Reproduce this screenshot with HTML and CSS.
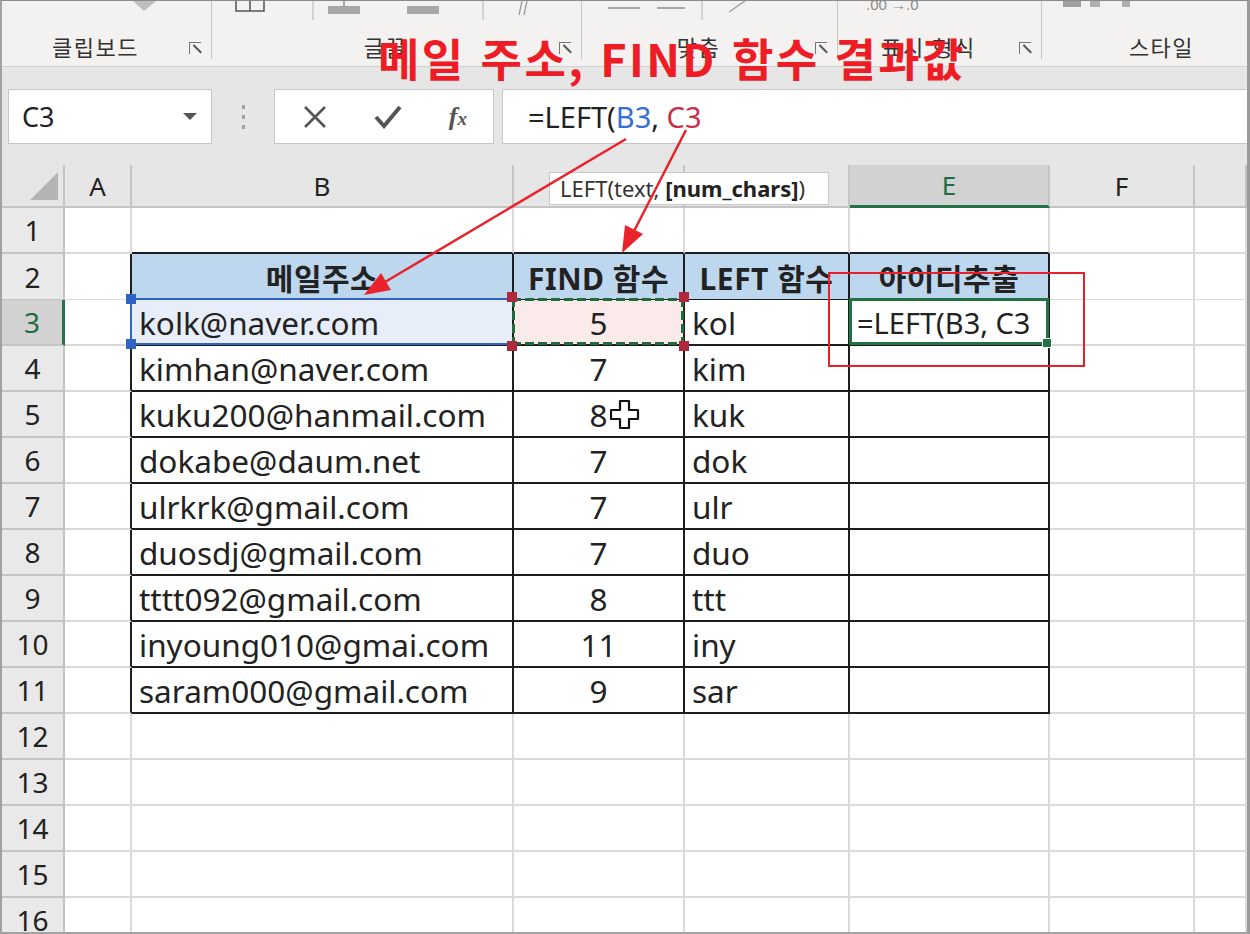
FILE: index.html
```html
<!DOCTYPE html>
<html lang="ko">
<head>
    <meta charset="UTF-8">
    <meta name="viewport" content="width=device-width, initial-scale=1.0">
    <title>LEFT 함수 - 아이디 추출</title>
    <link rel="stylesheet" href="styles.css">
</head>
<body>
    <div class="window">

        <!-- 리본 (잘린 아래쪽) -->
        <div class="ribbon">
            <div class="group g1">
                <svg class="g-top" width="212" height="22">
                    <polygon points="131,0 154,0 142,10" fill="#bdbdbd"/>
                </svg>
                <div class="g-label"><span>클립보드</span><i class="launcher"></i></div>
            </div>
            <div class="group g2">
                <svg class="g-top" width="370" height="22">
                    <rect x="24" y="-4" width="28" height="14" fill="none" stroke="#555" stroke-width="1.5"/>
                    <line x1="38" y1="-4" x2="38" y2="10" stroke="#555" stroke-width="1.5"/>
                    <line x1="101" y1="0" x2="101" y2="19" stroke="#c8c8c8" stroke-width="1.5"/>
                    <rect x="116" y="5" width="32" height="8" fill="#a8a8a8"/>
                    <rect x="131" y="0" width="2" height="5" fill="#a8a8a8"/>
                    <rect x="195" y="5" width="32" height="8" fill="#a8a8a8"/>
                    <line x1="271" y1="0" x2="271" y2="19" stroke="#c8c8c8" stroke-width="1.5"/>
                    <line x1="310" y1="0" x2="307" y2="14" stroke="#999" stroke-width="1.2"/>
                    <line x1="315" y1="0" x2="312" y2="14" stroke="#999" stroke-width="1.2"/>
                </svg>
                <div class="g-label"><span>글꼴</span><i class="launcher"></i></div>
            </div>
            <div class="group g3">
                <svg class="g-top" width="256" height="22">
                    <line x1="26" y1="7" x2="58" y2="7" stroke="#8c8c8c" stroke-width="1.5"/>
                    <line x1="75" y1="7" x2="103" y2="7" stroke="#8c8c8c" stroke-width="1.5"/>
                    <line x1="120" y1="0" x2="120" y2="19" stroke="#c8c8c8" stroke-width="1.5"/>
                    <line x1="163" y1="0" x2="147" y2="11" stroke="#a0a0a0" stroke-width="1.5"/>
                </svg>
                <div class="g-label"><span>맞춤</span><i class="launcher"></i></div>
            </div>
            <div class="group g4">
                <svg class="g-top" width="204" height="22">
                    <text x="28" y="9" font-size="15" fill="#8a8a8a" font-family="Liberation Sans, sans-serif">.00 &#8594;.0</text>
                </svg>
                <div class="g-label"><span>표시 형식</span><i class="launcher"></i></div>
            </div>
            <div class="group g5">
                <svg class="g-top" width="200" height="22">
                    <rect x="21" y="0" width="18" height="6" fill="#a0a0a0"/>
                    <rect x="48" y="0" width="10" height="6" fill="#b0b0b0"/>
                    <rect x="80" y="0" width="8" height="6" fill="#b0b0b0"/>
                </svg>
                <div class="g-label"><span>스타일</span></div>
            </div>
        </div>

        <!-- 이름 상자 / 수식 입력줄 -->
        <div class="formula-area">
            <div class="name-box">
                <span>C3</span>
                <svg width="14" height="8"><polygon points="0,0 14,0 7,7" fill="#555"/></svg>
            </div>
            <div class="dots"><b></b><b></b><b></b></div>
            <div class="fbuttons">
                <svg width="24" height="24"><path d="M2 2 L22 22 M22 2 L2 22" stroke="#555" stroke-width="2.6"/></svg>
                <svg width="28" height="24"><path d="M2 12 L10 21 L26 2" stroke="#555" stroke-width="4" fill="none"/></svg>
                <span class="fx">f<small>x</small></span>
            </div>
            <div class="finput"><span>=LEFT(<span class="ref-b">B3</span>, <span class="ref-c">C3</span></span></div>
        </div>

        <!-- 시트 -->
        <div class="sheet">
            <div class="row colhead">
                <div class="corner"><svg width="28" height="28"><polygon points="28,0 28,28 0,28" fill="#b4b4b4"/></svg></div>
                <div>A</div><div>B</div><div>C</div><div>D</div><div class="sel">E</div><div>F</div><div></div>
            </div>
            <div class="row">
                <div class="rh">1</div><div></div><div class="tt"></div><div class="tt"></div><div class="tt"></div><div class="tt"></div><div></div><div></div>
            </div>
            <div class="row">
                <div class="rh">2</div><div class="tl"></div>
                <div class="t th">메일주소</div><div class="t th">FIND 함수</div><div class="t th">LEFT 함수</div><div class="t th">아이디추출</div>
                <div></div><div></div>
            </div>
            <div class="row">
                <div class="rh sel">3</div><div class="tl"></div>
                <div class="t b3">kolk@naver.com
                    <span class="sel-blue"><i class="k k1"></i><i class="k k2"></i></span>
                </div>
                <div class="t num c3">5
                    <span class="sel-dash"><i class="k k1"></i><i class="k k2"></i><i class="k k3"></i><i class="k k4"></i></span>
                </div>
                <div class="t">kol</div>
                <div class="t e3">=LEFT(B3, C3<span class="sel-green"><i class="handle"></i></span></div>
                <div></div><div></div>
            </div>
            <div class="row">
                <div class="rh">4</div><div class="tl"></div>
                <div class="t">kimhan@naver.com</div><div class="t num">7</div><div class="t">kim</div><div class="t"></div>
                <div></div><div></div>
            </div>
            <div class="row">
                <div class="rh">5</div><div class="tl"></div>
                <div class="t">kuku200@hanmail.com</div><div class="t num">8</div><div class="t">kuk</div><div class="t"></div>
                <div></div><div></div>
            </div>
            <div class="row">
                <div class="rh">6</div><div class="tl"></div>
                <div class="t">dokabe@daum.net</div><div class="t num">7</div><div class="t">dok</div><div class="t"></div>
                <div></div><div></div>
            </div>
            <div class="row">
                <div class="rh">7</div><div class="tl"></div>
                <div class="t">ulrkrk@gmail.com</div><div class="t num">7</div><div class="t">ulr</div><div class="t"></div>
                <div></div><div></div>
            </div>
            <div class="row">
                <div class="rh">8</div><div class="tl"></div>
                <div class="t">duosdj@gmail.com</div><div class="t num">7</div><div class="t">duo</div><div class="t"></div>
                <div></div><div></div>
            </div>
            <div class="row">
                <div class="rh">9</div><div class="tl"></div>
                <div class="t">tttt092@gmail.com</div><div class="t num">8</div><div class="t">ttt</div><div class="t"></div>
                <div></div><div></div>
            </div>
            <div class="row">
                <div class="rh">10</div><div class="tl"></div>
                <div class="t">inyoung010@gmai.com</div><div class="t num">11</div><div class="t">iny</div><div class="t"></div>
                <div></div><div></div>
            </div>
            <div class="row">
                <div class="rh">11</div><div class="tl"></div>
                <div class="t">saram000@gmail.com</div><div class="t num">9</div><div class="t">sar</div><div class="t"></div>
                <div></div><div></div>
            </div>
            <div class="row">
                <div class="rh">12</div><div></div><div></div><div></div><div></div><div></div><div></div><div></div>
            </div>
            <div class="row">
                <div class="rh">13</div><div></div><div></div><div></div><div></div><div></div><div></div><div></div>
            </div>
            <div class="row">
                <div class="rh">14</div><div></div><div></div><div></div><div></div><div></div><div></div><div></div>
            </div>
            <div class="row">
                <div class="rh">15</div><div></div><div></div><div></div><div></div><div></div><div></div><div></div>
            </div>
            <div class="row">
                <div class="rh">16</div><div></div><div></div><div></div><div></div><div></div><div></div><div></div>
            </div>
        </div>

        <!-- 수식 도움말 -->
        <div class="tooltip">LEFT(text, <b>[num_chars]</b>)</div>

        <!-- 주석: 화살표, 빨간 상자, 제목 -->
        <svg class="arrows" width="1245" height="931">
            <line x1="624" y1="138" x2="378" y2="284" stroke="#e8232b" stroke-width="2.5"/>
            <polygon points="362,294 389,289 379,272" fill="#e8232b"/>
            <line x1="684" y1="129" x2="630" y2="234" stroke="#e8232b" stroke-width="2.5"/>
            <polygon points="620,252 641,233 623,224" fill="#e8232b"/>
        </svg>
        <div class="red-box"></div>
        <svg class="cursor" width="30" height="32">
            <path d="M10 2 H19 V11 H28 V20 H19 V29 H10 V20 H1 V11 H10 Z" fill="#fff" stroke="#111" stroke-width="2.2" stroke-linejoin="round"/>
        </svg>
        <div class="title">메일 주소, FIND 함수 결과값</div>
    </div>
</body>
</html>
```

FILE: styles.css
```css
body {
    margin: 0;
    background-color: #fff;
    font-family: "Noto Sans", "Noto Sans CJK KR", sans-serif;
    color: #222;
}
.window {
    position: relative;
    width: 1250px;
    height: 934px;
    box-sizing: border-box;
    border: 2px solid #a2a2a2;
    border-top: 1px solid #8a8a8a;
    border-right: 3px solid #9a9a9a;
    overflow: hidden;
    background: #e6e6e6;
}

/* ribbon */
.ribbon {
    display: flex;
    height: 65px;
    background: #f3f2f1;
    border-bottom: 1px solid #d0d0d0;
    font-family: "Noto Sans CJK KR", sans-serif;
}
.group {
    height: 58px;
    border-right: 1.5px solid #c8c6c4;
    display: flex;
    flex-direction: column;
    box-sizing: border-box;
}
.g1 { width: 210px; }
.g2 { width: 370px; }
.g3 { width: 256px; }
.g4 { width: 204px; }
.g5 { flex: 1; border-right: none; }
.g-top {
    display: block;
    height: 22px;
}
.g-label {
    display: flex;
    align-items: center;
    height: 36px;
    font-size: 22px;
    letter-spacing: 1.5px;
    color: #333;
}
.g-label span {
    flex: 1;
    text-align: center;
    padding-top: 10px;
}
.g5 .g-label span {
    padding-left: 34px;
}
.launcher {
    width: 11px;
    height: 11px;
    margin: 14px 10px 0 0;
    border-left: 1.5px solid #777;
    border-top: 1.5px solid #777;
    position: relative;
}
.launcher::after {
    content: "";
    position: absolute;
    left: 2px;
    top: 5px;
    width: 11px;
    height: 1.5px;
    background: #555;
    transform: rotate(45deg);
}

/* formula bar */
.formula-area {
    display: flex;
    align-items: flex-start;
    height: 98px;
    padding: 22px 0 0 6px;
    box-sizing: border-box;
}
.name-box,
.fbuttons,
.finput {
    height: 55px;
    box-sizing: border-box;
    background: #fff;
    border: 1px solid #c6c6c6;
}
.name-box {
    width: 204px;
    display: flex;
    align-items: center;
    justify-content: space-between;
    padding: 0 14px 0 13px;
    font-size: 27px;
}
.dots {
    width: 62px;
    height: 55px;
    display: flex;
    flex-direction: column;
    align-items: center;
    justify-content: center;
    gap: 6px;
}
.dots b {
    width: 3px;
    height: 4px;
    background: #a0a0a0;
}
.fbuttons {
    width: 220px;
    display: flex;
    align-items: center;
    justify-content: space-between;
    padding: 0 26px 0 28px;
}
.fx {
    font-family: "Liberation Serif", serif;
    font-style: italic;
    font-weight: bold;
    font-size: 26px;
    color: #555;
}
.fx small {
    font-size: 19px;
}
.finput {
    flex: 1;
    margin-left: 8px;
    border-right: none;
    display: flex;
    align-items: center;
    padding-left: 25px;
    font-size: 29px;
    white-space: pre;
}
.ref-b { color: #3570d4; }
.ref-c { color: #c7304a; }

/* sheet */
.row {
    display: grid;
    grid-template-columns: 63px 67px 382px 171px 165px 200px 145px 1fr;
    height: 46px;
}
.row > div {
    box-sizing: border-box;
    border-right: 2px solid #dadada;
    border-bottom: 2px solid #dadada;
    display: flex;
    align-items: center;
    padding: 1px 7px 0;
    font-size: 31.5px;
    white-space: nowrap;
    background: #fff;
}
.colhead {
    height: 43px;
}
.colhead > div {
    background: #e6e6e6;
    border-color: #c4c4c4;
    justify-content: center;
    font-size: 26px;
    padding: 0;
}
.colhead .corner {
    justify-content: flex-end;
    align-items: flex-end;
    padding: 0 5px 6px 0;
}
.colhead .sel {
    background: #d2d2d2;
    color: #1d6b45;
    border-bottom: 3px solid #217346;
}
.row > .rh {
    background: #e9e9e9;
    border-color: #c4c4c4;
    justify-content: center;
    font-size: 28px;
    padding: 0;
}
.row > .rh.sel {
    background: #d2d2d2;
    color: #1d6b45;
    border-right: 3px solid #217346;
}
.row > .tt { border-bottom-color: #1e1e1e; }
.row > .tl { border-right-color: #1e1e1e; }
.row > .t {
    border-right-color: #1e1e1e;
    border-bottom-color: #1e1e1e;
}
.row > .th {
    background: #bdd7ee;
    font-weight: bold;
    justify-content: center;
    font-size: 30px;
    letter-spacing: 0.5px;
}
.row > .num { justify-content: center; }

/* selections */
.b3, .c3, .e3 { position: relative; }
.row > .b3 { background: #e8eef9; }
.row > .c3 { background: #fbeaea; }
.row > .e3 { font-size: 29px; }
.sel-blue,
.sel-dash,
.sel-green {
    position: absolute;
    left: -2px;
    top: -2px;
    right: -1px;
    bottom: -1px;
}
.sel-blue { border: 2px solid #2f63c6; border-right: none; }
.sel-dash {
    background:
        repeating-linear-gradient(90deg, #1f6b3c 0 9px, transparent 9px 13px) top / 100% 3px no-repeat,
        repeating-linear-gradient(90deg, #1f6b3c 0 9px, transparent 9px 13px) bottom / 100% 3px no-repeat,
        repeating-linear-gradient(180deg, #1f6b3c 0 9px, transparent 9px 13px) left / 3px 100% no-repeat,
        repeating-linear-gradient(180deg, #1f6b3c 0 9px, transparent 9px 13px) right / 3px 100% no-repeat;
}
.sel-green { border: 3px solid #217346; left: -1px; }
.k {
    position: absolute;
    width: 10px;
    height: 10px;
}
.sel-blue .k { background: #2f63c6; left: -6px; }
.sel-dash .k { background: #b0283b; }
.k1 { top: -6px; }
.k2 { bottom: -6px; }
.sel-dash .k1, .sel-dash .k2 { left: -5px; }
.sel-dash .k3 { top: -6px; right: -5px; }
.sel-dash .k4 { bottom: -6px; right: -5px; }
.handle {
    position: absolute;
    right: -6px;
    bottom: -6px;
    width: 8px;
    height: 8px;
    background: #217346;
    border: 1.5px solid #fff;
}

/* overlays */
.tooltip {
    position: absolute;
    left: 547px;
    top: 171px;
    width: 280px;
    height: 33px;
    box-sizing: border-box;
    background: #fff;
    border: 1px solid #c8c8c8;
    font-size: 22px;
    color: #333;
    padding-left: 10px;
    line-height: 31px;
    white-space: pre;
}
.tooltip b { color: #222; }
.arrows {
    position: absolute;
    left: 0;
    top: 0;
}
.red-box {
    position: absolute;
    left: 826px;
    top: 271px;
    width: 257px;
    height: 95px;
    box-sizing: border-box;
    border: 2px solid #e8202a;
}
.cursor {
    position: absolute;
    left: 608px;
    top: 398px;
}
.title {
    position: absolute;
    left: 376px;
    top: 34px;
    font-family: "Noto Sans CJK KR", sans-serif;
    font-weight: bold;
    font-size: 45px;
    letter-spacing: 2.4px;
    line-height: 1;
    color: #ee1c25;
    white-space: nowrap;
}
```
